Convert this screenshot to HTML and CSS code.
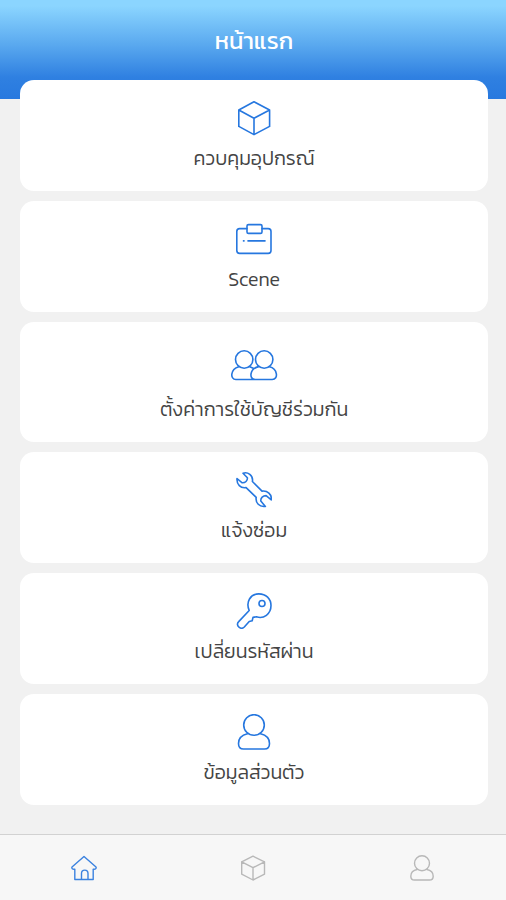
FILE: index.html
```html
<!DOCTYPE html>
<html lang="th">
<head>
<meta charset="utf-8">
<meta name="viewport" content="width=device-width, initial-scale=1">
<title>หน้าแรก</title>
<link rel="stylesheet" href="styles.css">
</head>
<body>
<div class="app">
  <header class="header"><h1 class="title">หน้าแรก</h1></header>
  <main class="menu">
    <a class="card">
      <svg class="icon" viewBox="0 0 36 36"><path d="M18 1.8 33.6 10v16.4L18 34.6 2.8 26.4V10zM2.8 10 18 18.2 33.6 10M18 18.2v16.4"/></svg>
      <span class="label">ควบคุมอุปกรณ์</span>
    </a>
    <a class="card">
      <svg class="icon" viewBox="0 0 36 36"><path d="M11 7.6H3.600a2.800 2.800 0 0 0-2.800 2.800v19.200a2.800 2.800 0 0 0 2.800 2.800h28.600a2.800 2.800 0 0 0 2.800-2.800V10.400a2.800 2.800 0 0 0-2.800-2.800H26"/><rect x="11" y="3.600" width="15" height="8.800" rx="1.500"/><path d="M7.500 19.900h.5M12 19.900H29"/></svg>
      <span class="label">Scene</span>
    </a>
    <a class="card card-tall">
      <svg class="icon icon-wide" viewBox="0 0 48 36"><circle cx="14.200" cy="12.500" r="8.700"/><circle cx="34.200" cy="12.500" r="8.700"/><path d="M5.800 32.500c-5.600 0-6-10 3-12.800M19.800 19.800l4 1.800M28.600 19.600c-9 1.900-10 12.900-3.400 12.900M5.800 32.500h36.400c6.500 0 5.500-11-2.800-12.800"/></svg>
      <span class="label">ตั้งค่าการใช้บัญชีร่วมกัน</span>
    </a>
    <a class="card">
      <svg class="icon" viewBox="0 0 36 36"><path d="M7 1.300C11.500-.4 17.500 3.200 16.400 9.500L26 19.100c5.300-.8 10 3.200 9.300 8.800l-5.200-4.300c-3.100 0-5.600 2.400-5.300 5.400l4.600 5.400c-6 .9-10.100-3.500-9.200-9.100L10.100 15.600C4.600 16.500.5 12.600 1 6.500l5.200 4.300c3.100.2 5.400-2 5.200-5z"/></svg>
      <span class="label">แจ้งซ่อม</span>
    </a>
    <a class="card">
      <svg class="icon" viewBox="0 0 36 36"><path d="M13.200 17.500C9.500 9 14.500.900 22.800.900c7.200 0 12.200 4.900 12.200 11.700 0 8.500-7.400 13.700-14.600 11.200l-3.400.6-.8 3.400-3 .7L8.300 34c-1.600 1.500-3.700 1.500-5.300.2-2-1.700-2-4-.3-5.600z"/><circle cx="26" cy="10.500" r="3"/></svg>
      <span class="label">เปลี่ยนรหัสผ่าน</span>
    </a>
    <a class="card">
      <svg class="icon" viewBox="0 0 36 36"><circle cx="18" cy="11" r="10.300"/><path d="M11.400 19.800C5 21.300 2.500 25 2.500 29.500c0 3.800 1.800 5.500 5 5.500h21c3.200 0 5-1.700 5-5.500 0-4.500-2.500-8.200-8.900-9.700"/></svg>
      <span class="label">ข้อมูลส่วนตัว</span>
    </a>
  </main>
  <nav class="tabs">
    <a class="tab tab-active"><svg class="tab-icon" viewBox="0 0 26 26"><path d="M13 1.500 25 12c.6 1.500-.5 2.500-2.800 2.100V24.500H17V18.500c0-4.500-6.500-4.500-6.500 0v6H3.800V14.100C1.500 14.500.400 13.500 1 12zM10.500 24.500H17"/></svg></a>
    <a class="tab"><svg class="tab-icon" viewBox="0 0 26 26"><path d="M13 1.200 24.500 6.800v12.400L13 25 1.700 19.200V6.800zM1.700 6.800 13 12.700l11.500-5.900M13 12.700V25"/></svg></a>
    <a class="tab"><svg class="tab-icon" viewBox="0 0 26 26"><circle cx="13" cy="8.200" r="7.500"/><path d="M8.200 14.500C3.500 15.300 1.800 18 1.800 21.200c0 2.700 1.300 3.800 3.700 3.800h15c2.400 0 3.700-1.100 3.700-3.800 0-3.200-1.700-5.900-6.400-6.700"/></svg></a>
  </nav>
</div>
</body>
</html>
```
FILE: styles.css
```css
* { box-sizing: border-box; }
body { margin: 0; background: #f1f1f1; font-family: Kanit, Prompt, "Noto Sans Thai", "Noto Sans", sans-serif; }
.app { height: 900px; display: flex; flex-direction: column; overflow: hidden; }
.header { flex: none; height: 99px; padding-top: 26px; background: linear-gradient(#8bd5ff 0%, #8bd5ff 6%, #5aa9ef 45%, #2f80e1 78%, #2879df 100%); text-align: center; }
.title { margin: 0; padding-left: 2px; font-size: 23.700px; line-height: 30px; font-weight: 400; color: #fff; }
.menu { flex: 1; margin-top: -19px; padding: 0 18px 0 20px; display: flex; flex-direction: column; gap: 10px; }
.card { flex: none; height: 111px; padding-top: 20px; border-radius: 14px; background: #fff; display: flex; flex-direction: column; align-items: center; gap: 10px; }
.card-tall { height: 120px; padding-top: 25px; gap: 14px; }
.icon { width: 36px; height: 36px; fill: none; stroke: #2677df; stroke-width: 1.6; stroke-linejoin: round; stroke-linecap: round; }
.icon-wide { width: 48px; }
.label { height: 24px; font-size: 19.6px; line-height: 24px; font-weight: 300; color: #444; white-space: nowrap; }
.tabs { flex: none; height: 66px; border-top: 1px solid #d2d2d2; background: #f7f7f7; display: grid; grid-template-columns: repeat(3, 1fr); }
.tab { display: flex; justify-content: center; padding-top: 20px; }
.tab-icon { width: 26px; height: 26px; fill: none; stroke: #b8b8b8; stroke-width: 1.4; stroke-linejoin: round; stroke-linecap: round; }
.tab-active .tab-icon { stroke: #3b82df; }
```
